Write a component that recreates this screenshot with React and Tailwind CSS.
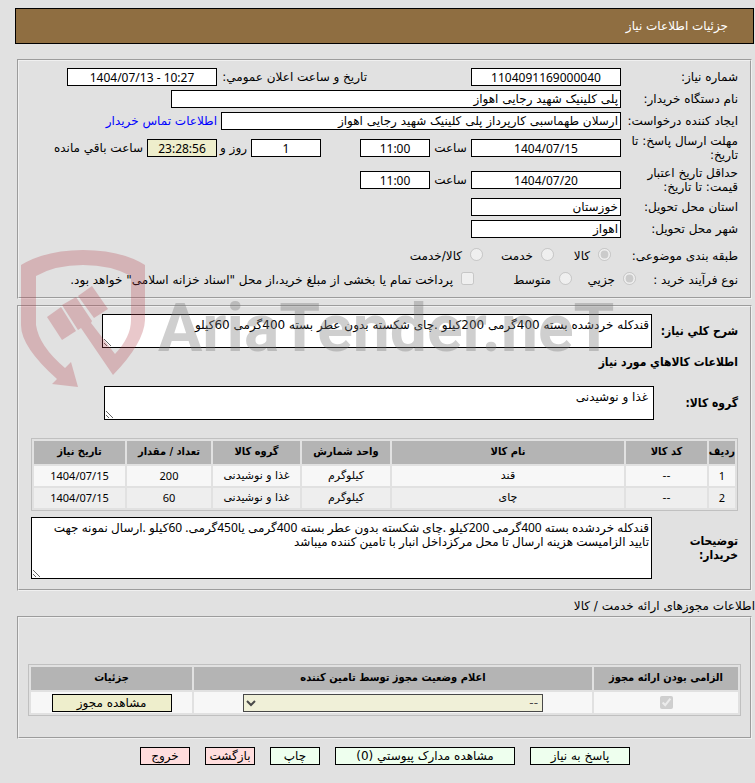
import clsx from 'clsx';

const goods = [
  { id: 1, code: '--', name: 'قند', unit: 'کیلوگرم', group: 'غذا و نوشیدنی', qty: '200', date: '1404/07/15' },
  { id: 2, code: '--', name: 'چای', unit: 'کیلوگرم', group: 'غذا و نوشیدنی', qty: '60', date: '1404/07/15' },
];

const goodsColumns = [
  { title: 'ردیف', width: 'w-[26px]' },
  { title: 'کد کالا', width: 'w-[81px]' },
  { title: 'نام کالا', width: '' },
  { title: 'واحد شمارش', width: 'w-[88px]' },
  { title: 'گروه کالا', width: 'w-[87px]' },
  { title: 'تعداد / مقدار', width: 'w-[84px]' },
  { title: 'تاریخ نیاز', width: 'w-[91px]' },
];

const actions = [
  { label: 'پاسخ به نیاز', className: 'w-[100px] bg-[#eeffee]' },
  { label: 'مشاهده مدارک پیوستي (0)', className: 'w-[180px] bg-[#eeffee]' },
  { label: 'چاپ', className: 'w-[50px] bg-[#eeffee]' },
  { label: 'بازگشت', className: 'w-[50px] bg-[#ffdddd]' },
  { label: 'خروج', className: 'w-[50px] bg-[#ffdddd]' },
];

const boldFont = "font-bold font-['DejaVu_Sans_Condensed','DejaVu_Sans',sans-serif]";
const numberFont = "font-['Noto_Sans','DejaVu_Sans',sans-serif]";

function Panel({ className, children }) {
  return (
    <fieldset className={clsx('ms-[3px] me-0.5 min-w-0 border-2 border-[#f0f0f0] [border-style:groove]', className)}>
      {children}
    </fieldset>
  );
}

// centred fields hold numbers and dates
function Field({ id, value, center, dir, className }) {
  return (
    <input
      id={id}
      type="text"
      dir={dir}
      readOnly
      defaultValue={value}
      className={clsx(
        'h-[18px] shrink-0 border border-black px-0.5 text-xs',
        center && 'text-center',
        center && numberFont,
        className
      )}
    />
  );
}

function Row({ label, htmlFor, tall, children }) {
  return (
    <div className={clsx('flex items-center', tall ? 'h-8' : 'h-[22px]')}>
      <label htmlFor={htmlFor} className="w-[117px] shrink-0 leading-[14px]">
        {label}
      </label>
      {children}
    </div>
  );
}

function Choice({ type = 'radio', name, label, checked, className }) {
  return (
    <label className={clsx('flex items-center gap-2', className)}>
      <input type={type} name={name} defaultChecked={checked} disabled className="mb-1 size-[13px] shrink-0" />
      <span className="whitespace-nowrap">{label}</span>
    </label>
  );
}

function Watermark() {
  return (
    <div dir="ltr" className="pointer-events-none absolute start-5 top-[249px] flex">
      <svg width="126" height="139" viewBox="19 249 126 139" className="shrink-0 fill-[#b43e49] opacity-[.28]">
        <path d="M20 265Q45 250 82 250Q120 250 144 265V320Q143 343 112 375L80 328L77 330L61 305L75 297L91 321L90 323L114 354Q130 337 130 320V276Q110 265 82 265Q54 265 35 276V325Q38 346 64 368L70 362L77 387L51 384L56 379Q20 347 20 325Z" />
        <path d="M46 317L60 307L75 331L61 340Z" />
        <path d="M77 296L91 286L107 309L93 318Z" />
      </svg>
      <span className="ms-3 mt-9 font-['Roboto','Liberation_Sans',sans-serif] text-[66px] leading-[88px] font-bold text-[#777777] opacity-35">
        AriaTender.neT
      </span>
    </div>
  );
}

export default function App() {
  return (
    <div
      dir="rtl"
      className="relative min-h-screen bg-[#e1e1e1] pt-2 pb-[18px] pl-[15px] font-['DejaVu_Sans',sans-serif] text-xs text-black"
    >
      <header className="ms-px flex h-9 items-center border border-black bg-[#8f6e41] px-[25px] text-white">
        <h1>جزئیات اطلاعات نیاز</h1>
      </header>

      <Panel className="mt-[15px] pt-[5px] pe-2 ps-3 pb-[5px]">
        <Row label="شماره نیاز:" htmlFor="need-no">
          <div className="w-[254px] shrink-0">
            <Field id="need-no" value="1104091169000040" center className="w-[150px] bg-white" />
          </div>
          <label htmlFor="announce" className="w-[150px] shrink-0 whitespace-nowrap">
            تاریخ و ساعت اعلان عمومي:
          </label>
          <Field id="announce" value="1404/07/13 - 10:27" dir="ltr" center className="w-[150px] bg-white" />
        </Row>
        <Row label="نام دستگاه خریدار:" htmlFor="buyer">
          <Field id="buyer" value="پلی کلینیک شهید رجایی اهواز" className="w-[450px] bg-white" />
        </Row>
        <Row label="ایجاد کننده درخواست:" htmlFor="creator">
          <Field id="creator" value="ارسلان طهماسبی کارپرداز پلی کلینیک شهید رجایی اهواز" className="w-[400px] bg-white" />
          <a href="#contact" className="ms-1 whitespace-nowrap text-[#0000ff]">
            اطلاعات تماس خریدار
          </a>
        </Row>
        <Row label="مهلت ارسال پاسخ: تا تاریخ:" htmlFor="deadline" tall>
          <div className="flex w-[300px] shrink-0 items-center">
            <Field id="deadline" value="1404/07/15" center className="w-[150px] bg-white" />
            <label htmlFor="deadline-time" className="w-[41px] text-center">ساعت</label>
            <Field id="deadline-time" value="11:00" center className="w-[70px] bg-white" />
          </div>
          <Field id="days-left" value="1" center className="w-[70px] bg-white" />
          <label htmlFor="days-left" className="w-[34px] ps-1 whitespace-nowrap">روز و</label>
          <Field id="time-left" value="23:28:56" center className="w-[70px] bg-[#eeeecc]" />
          <label htmlFor="time-left" className="ms-1 whitespace-nowrap">ساعت باقي مانده</label>
        </Row>
        <Row label="حداقل تاریخ اعتبار قیمت: تا تاریخ:" htmlFor="valid-until" tall>
          <Field id="valid-until" value="1404/07/20" center className="w-[150px] bg-white" />
          <label htmlFor="valid-time" className="w-[41px] text-center">ساعت</label>
          <Field id="valid-time" value="11:00" center className="w-[70px] bg-white" />
        </Row>
        <Row label="استان محل تحویل:" htmlFor="province">
          <Field id="province" value="خوزستان" className="w-[150px] bg-white" />
        </Row>
        <Row label="شهر محل تحویل:" htmlFor="city">
          <Field id="city" value="اهواز" className="w-[150px] bg-white" />
        </Row>
        <div className="mt-1 flex h-6 items-center">
          <span className="w-[127px] shrink-0">طبقه بندی موضوعی:</span>
          <Choice name="subject" label="کالا" checked className="w-[57px]" />
          <Choice name="subject" label="خدمت" className="w-[71px]" />
          <Choice name="subject" label="کالا/خدمت" />
        </div>
        <div className="flex h-6 items-center">
          <span className="w-[102px] shrink-0">نوع فرآیند خرید :</span>
          <Choice name="process" label="جزيي" checked className="w-[64px]" />
          <Choice name="process" label="متوسط" className="w-[98px]" />
          <Choice type="checkbox" label={'پرداخت تمام یا بخشی از مبلغ خرید،از محل "اسناد خزانه اسلامی" خواهد بود.'} />
        </div>
      </Panel>

      <Panel className="mt-1.5 pt-[7px] pe-3 ps-3 pb-2.5">
        <div className="flex items-center">
          <label htmlFor="summary" className={clsx('w-[86px] shrink-0', boldFont)}>شرح کلي نیاز:</label>
          <textarea
            id="summary"
            readOnly
            defaultValue="قندکله خردشده بسته 400گرمی 200کیلو .چای شکسته بدون عطر بسته 400گرمی 60کیلو"
            className="h-[34px] w-[550px] overflow-hidden border border-black bg-white px-0.5 py-[3px] leading-[14px]"
          />
        </div>
        <h2 className={clsx('mt-1.5', boldFont)}>اطلاعات کالاهاي مورد نیاز</h2>
        <div className="mt-4 flex items-center">
          <label htmlFor="group" className={clsx('w-[84px] shrink-0', boldFont)}>گروه کالا:</label>
          <textarea
            id="group"
            readOnly
            defaultValue="غذا و نوشیدنی"
            className="h-[34px] w-[550px] overflow-hidden border border-black bg-white px-[5px] py-[3px] leading-[14px]"
          />
        </div>
        <table className="mt-[18px] w-full table-fixed border-separate border-spacing-0.5 border border-[#c0c0c0] text-center text-[11px]">
          <thead>
            <tr className="h-[23px] bg-[#b4b4b4]">
              {goodsColumns.map((c) => (
                <th key={c.title} className={clsx('p-0 whitespace-nowrap', boldFont, c.width)}>{c.title}</th>
              ))}
            </tr>
          </thead>
          <tbody>
            {goods.map((g) => (
              <tr key={g.id} className="h-5 odd:bg-[#f7f7f7] even:bg-[#eeeeee]">
                <td className={clsx('p-0', numberFont)}>{g.id}</td>
                <td className="p-0">{g.code}</td>
                <td className="p-0">{g.name}</td>
                <td className="p-0">{g.unit}</td>
                <td className="p-0">{g.group}</td>
                <td className={clsx('p-0', numberFont)}>{g.qty}</td>
                <td className={clsx('p-0', numberFont)}>{g.date}</td>
              </tr>
            ))}
          </tbody>
        </table>
        <div className="mt-1.5 flex items-center">
          <label htmlFor="notes" className={clsx('w-[86px] shrink-0 pe-6 leading-[14px]', boldFont)}>توضیحات خریدار:</label>
          <textarea
            id="notes"
            readOnly
            defaultValue="قندکله خردشده بسته 400گرمی 200کیلو .چای شکسته بدون عطر بسته 400گرمی یا450گرمی. 60کیلو .ارسال نمونه جهت تایید الزامیست هزینه ارسال تا محل مرکزداخل انبار با تامین کننده میباشد"
            className={clsx(
              'h-[62px] min-w-0 grow overflow-hidden border border-black bg-white px-0.5 py-[3px] leading-[14px]',
              numberFont
            )}
          />
        </div>
      </Panel>

      <h2 className="mt-1.5 leading-[18px]">اطلاعات مجوزهای ارائه خدمت / کالا</h2>

      <Panel className="mt-px px-[9px] pt-[46px] pb-[21px]">
        <table className="w-full table-fixed border-separate border-spacing-0.5 border border-[#c0c0c0] text-center text-[11px]">
          <thead>
            <tr className="h-[23px] bg-[#b4b4b4]">
              <th className={clsx('w-[144px] p-0', boldFont)}>الزامی بودن ارائه مجوز</th>
              <th className={clsx('p-0', boldFont)}>اعلام وضعیت مجوز توسط تامین کننده</th>
              <th className={clsx('w-[161px] p-0', boldFont)}>جزئیات</th>
            </tr>
          </thead>
          <tbody>
            <tr className="h-[21px] bg-[#f7f7f7]">
              <td className="p-0">
                <input type="checkbox" aria-label="الزامی بودن ارائه مجوز" defaultChecked disabled className="mx-auto block size-[13px]" />
              </td>
              <td className="p-0">
                <select
                  aria-label="اعلام وضعیت مجوز"
                  disabled
                  className="mx-auto block h-[18px] w-[300px] border border-black bg-[#eeeecc] text-xs text-black opacity-70"
                >
                  <option>--</option>
                </select>
              </td>
              <td className="p-0">
                <button type="button" className="mx-auto block h-[18px] w-[120px] border border-black bg-[#eeeecc] text-xs leading-4">
                  مشاهده مجوز
                </button>
              </td>
            </tr>
          </tbody>
        </table>
      </Panel>

      <div className="mt-2 flex justify-center gap-[15px]">
        {actions.map((a) => (
          <button key={a.label} type="button" className={clsx('h-[18px] border border-black leading-4 whitespace-nowrap', a.className)}>
            {a.label}
          </button>
        ))}
      </div>

      <Watermark />
    </div>
  );
}
